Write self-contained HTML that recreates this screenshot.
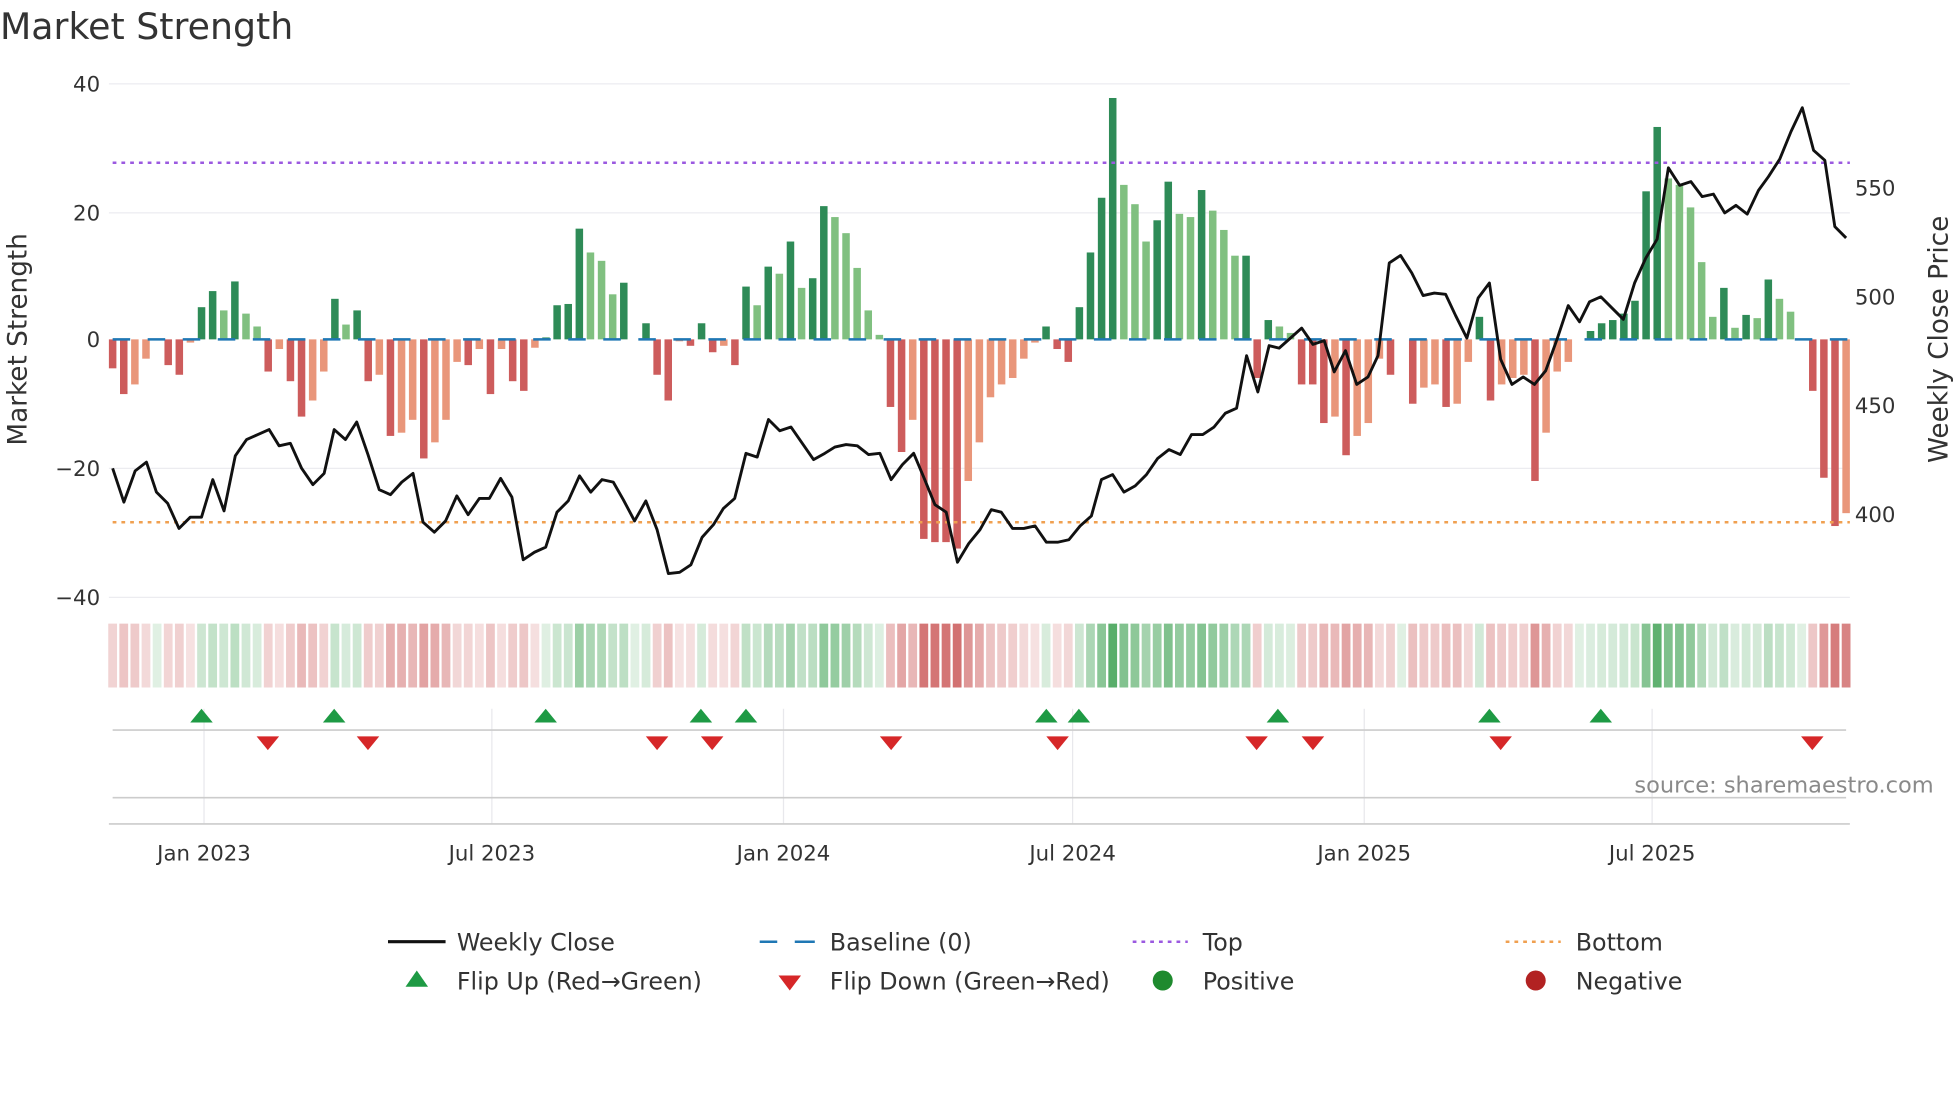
<!DOCTYPE html>
<html><head><meta charset="utf-8"><style>
html,body{margin:0;padding:0;background:#fff;width:1960px;height:1102px;overflow:hidden}
svg{display:block;font-family:"DejaVu Sans","Liberation Sans",sans-serif}
</style></head><body>
<svg id="s" width="1960" height="1102" viewBox="0 0 1566 880" preserveAspectRatio="none" xmlns="http://www.w3.org/2000/svg">
<rect width="1566" height="880" fill="#fff"/>
<text x="0" y="31" font-size="29" fill="#333">Market Strength</text>
<g stroke="#ececf0" stroke-width="1">
<line x1="87" x2="1478" y1="67" y2="67"/><line x1="87" x2="1478" y1="170" y2="170"/>
<line x1="87" x2="1478" y1="374" y2="374"/><line x1="87" x2="1478" y1="477" y2="477"/>
</g>
<g font-size="17" fill="#333" text-anchor="end">
<text x="80" y="73">40</text><text x="80" y="176">20</text><text x="80" y="277">0</text>
<text x="80" y="380">−20</text><text x="80" y="483">−40</text>
</g>
<g font-size="17" fill="#333">
<text x="1482" y="156">550</text><text x="1482" y="243">500</text><text x="1482" y="330">450</text><text x="1482" y="417">400</text>
</g>
<text transform="translate(21,271) rotate(-90)" font-size="21" fill="#333" text-anchor="middle">Market Strength</text>
<text transform="translate(1556,271) rotate(-90)" font-size="21" fill="#333" text-anchor="middle">Weekly Close Price</text>
<g id="bars"></g>
<line x1="90" x2="1478" y1="271" y2="271" stroke="#1f77b4" stroke-width="2" stroke-dasharray="14,14"/>
<line x1="90" x2="1478" y1="130" y2="130" stroke="#9b59e0" stroke-width="2" stroke-dasharray="3,4"/>
<line x1="90" x2="1478" y1="417" y2="417" stroke="#f0a050" stroke-width="2" stroke-dasharray="3,4"/>
<polyline id="price" fill="none" stroke="#111" stroke-width="2.3" stroke-linejoin="round"/>
<g id="heat"></g>
<g stroke="#e8e8ec" stroke-width="1">
<line x1="163" x2="163" y1="566" y2="658"/><line x1="393" x2="393" y1="566" y2="658"/>
<line x1="626" x2="626" y1="566" y2="658"/><line x1="857" x2="857" y1="566" y2="658"/>
<line x1="1090" x2="1090" y1="566" y2="658"/><line x1="1320" x2="1320" y1="566" y2="658"/>
</g>
<line x1="90" x2="1475" y1="583" y2="583" stroke="#ccc" stroke-width="1.3"/>
<line x1="90" x2="1475" y1="637" y2="637" stroke="#ccc" stroke-width="1.3"/>
<line x1="87" x2="1478" y1="658" y2="658" stroke="#ccc" stroke-width="1.3"/>
<g id="marks"></g>
<text x="1545" y="633" font-size="18" fill="#8a8a8a" text-anchor="end">source: sharemaestro.com</text>
<g font-size="17" fill="#333" text-anchor="middle">
<text x="163" y="687">Jan 2023</text><text x="393" y="687">Jul 2023</text><text x="626" y="687">Jan 2024</text>
<text x="857" y="687">Jul 2024</text><text x="1090" y="687">Jan 2025</text><text x="1320" y="687">Jul 2025</text>
</g>
<g font-size="19" fill="#333">
<line x1="310" x2="356" y1="752" y2="752" stroke="#111" stroke-width="2.5"/>
<text x="365" y="759">Weekly Close</text>
<line x1="607" x2="651" y1="752" y2="752" stroke="#1f77b4" stroke-width="2" stroke-dasharray="14,14"/>
<line x1="636" x2="651" y1="752" y2="752" stroke="#1f77b4" stroke-width="2"/>
<text x="663" y="759">Baseline (0)</text>
<line x1="905" x2="949" y1="752" y2="752" stroke="#9b59e0" stroke-width="2" stroke-dasharray="3,4"/>
<text x="961" y="759">Top</text>
<line x1="1203" x2="1247" y1="752" y2="752" stroke="#f0a050" stroke-width="2" stroke-dasharray="3,4"/>
<text x="1259" y="759">Bottom</text>
<polygon points="324,788 342,788 333,775" fill="#1e9a44"/>
<text x="365" y="790">Flip Up (Red→Green)</text>
<polygon points="622,779 640,779 631,791" fill="#d62728"/>
<text x="663" y="790">Flip Down (Green→Red)</text>
<circle cx="929" cy="783" r="8" fill="#1e8a2e"/>
<text x="961" y="790">Positive</text>
<circle cx="1227" cy="783" r="8" fill="#b22222"/>
<text x="1259" y="790">Negative</text>
</g>
</svg>
<script>
var v=[-4.5,-8.5,-7,-3,0,-4,-5.5,-0.5,5,7.5,4.5,9,4,2,-5,-1.5,-6.5,-12,-9.5,-5,6.3,2.3,4.5,-6.5,-5.5,-15,-14.5,-12.5,-18.5,-16,-12.5,-3.5,-4,-1.5,-8.5,-1.5,-6.5,-8,-1.3,0.3,5.3,5.5,17.2,13.5,12.2,7,8.8,0,2.5,-5.5,-9.5,-0.3,-1,2.5,-2,-1,-4,8.2,5.3,11.3,10.2,15.2,8,9.5,20.7,19,16.5,11.1,4.5,0.7,-10.5,-17.5,-12.5,-31,-31.5,-31.5,-32.5,-22,-16,-9,-7,-6,-3,-0.5,2,-1.5,-3.5,5,13.5,22,37.5,24,21,15.2,18.5,24.5,19.5,19,23.2,20,17,13,13,
-6,3,2,1,-7,-7,-13,-12,-18,-15,-13,-3,-5.5,0,-10,-7.5,-7,-10.5,-10,-3.5,3.5,-9.5,-7,-6,-5.5,-22,-14.5,-5,-3.5,0,1.3,2.5,3,4,6,23,33,25,24,20.5,12,3.5,8,1.8,3.8,3.3,9.3,6.3,4.3,0,-8,-21.5,-29,-27];
var NS="http://www.w3.org/2000/svg",n=v.length,dx=(1475-90)/(n-1);
function el(t,a,p){var e=document.createElementNS(NS,t);for(var k in a)e.setAttribute(k,a[k]);document.getElementById(p).appendChild(e);}
for(var i=0;i<n;i++){var x=90+i*dx,val=v[i],pr=i?v[i-1]:0,y=271-val*5.14,c;
 if(val>=0)c=val>=pr?"#2e8b57":"#80c080";else c=val<=pr?"#cd5c5c":"#e9967a";
 if(Math.abs(val)>0.05)el("rect",{x:x-3,y:Math.min(y,271),width:6,height:Math.abs(val*5.14),fill:c},"bars");
 var a=Math.min(0.85,0.16+Math.abs(val)/30*0.6);
 var hc=val>=0?"rgba(60,160,80,"+a+")":"rgba(200,80,80,"+a+")";
 el("rect",{x:x-3.5,y:498,width:7,height:51,fill:hc},"heat");}
var p="90,374 99,401 108,376 117,369 125,393 134,402 143,422 152,413 161,413 170,383 179,408 188,364 197,351 206,347 215,343 223,356 232,354 241,374 250,387 259,378 267,343 276,351 285,337 294,363 303,391 312,395 321,385 330,378 338,417 347,425 356,416 365,396 374,411 383,398 391,398 400,382 409,397 418,447 427,441 436,437 445,409 454,400 463,380 472,393 481,383 490,385 498,399 507,416 516,400 525,423 534,458 543,457 552,451 561,429 570,419 578,406 587,398 596,362 605,365 614,335 623,344 632,341 641,354 650,367 659,362 667,357 676,355 685,356 694,363 703,362 712,383 721,371 730,362 738,381 747,403 756,409 765,449 774,434 783,423 792,407 800,409 809,422 818,422 827,420 836,433 845,433 854,431 863,420 872,412 880,383 889,379 898,393 907,388 916,379 925,366 934,359 943,363 952,347 961,347 970,341 979,330 988,326 996,284 1005,313 1014,276 1022,278 1031,270 1040,262 1049,275 1058,272 1066,297 1075,280 1084,307 1093,301 1101,284 1110,210 1119,204 1128,218 1137,236 1146,234 1155,235 1163,252 1172,270 1181,238 1190,226 1199,287 1208,307 1217,301 1226,307 1235,296 1244,271 1253,244 1262,257 1270,241 1279,237 1288,246 1297,255 1306,226 1315,206 1324,191 1333,134 1342,148 1351,145 1360,157 1369,155 1378,170 1387,164 1396,171 1405,152 1413,141 1422,127 1431,105 1440,86 1449,120 1458,128 1466,181 1475,190";
document.getElementById("price").setAttribute("points",p);
[161,267,436,560,596,836,862,1021,1190,1279].forEach(function(x){el("polygon",{points:(x-9)+",577 "+(x+9)+",577 "+x+",566",fill:"#1e9a44"},"marks");});
[214,294,525,569,712,845,1004,1049,1199,1448].forEach(function(x){el("polygon",{points:(x-9)+",588 "+(x+9)+",588 "+x+",599",fill:"#d62728"},"marks");});
</script>
</body></html>
